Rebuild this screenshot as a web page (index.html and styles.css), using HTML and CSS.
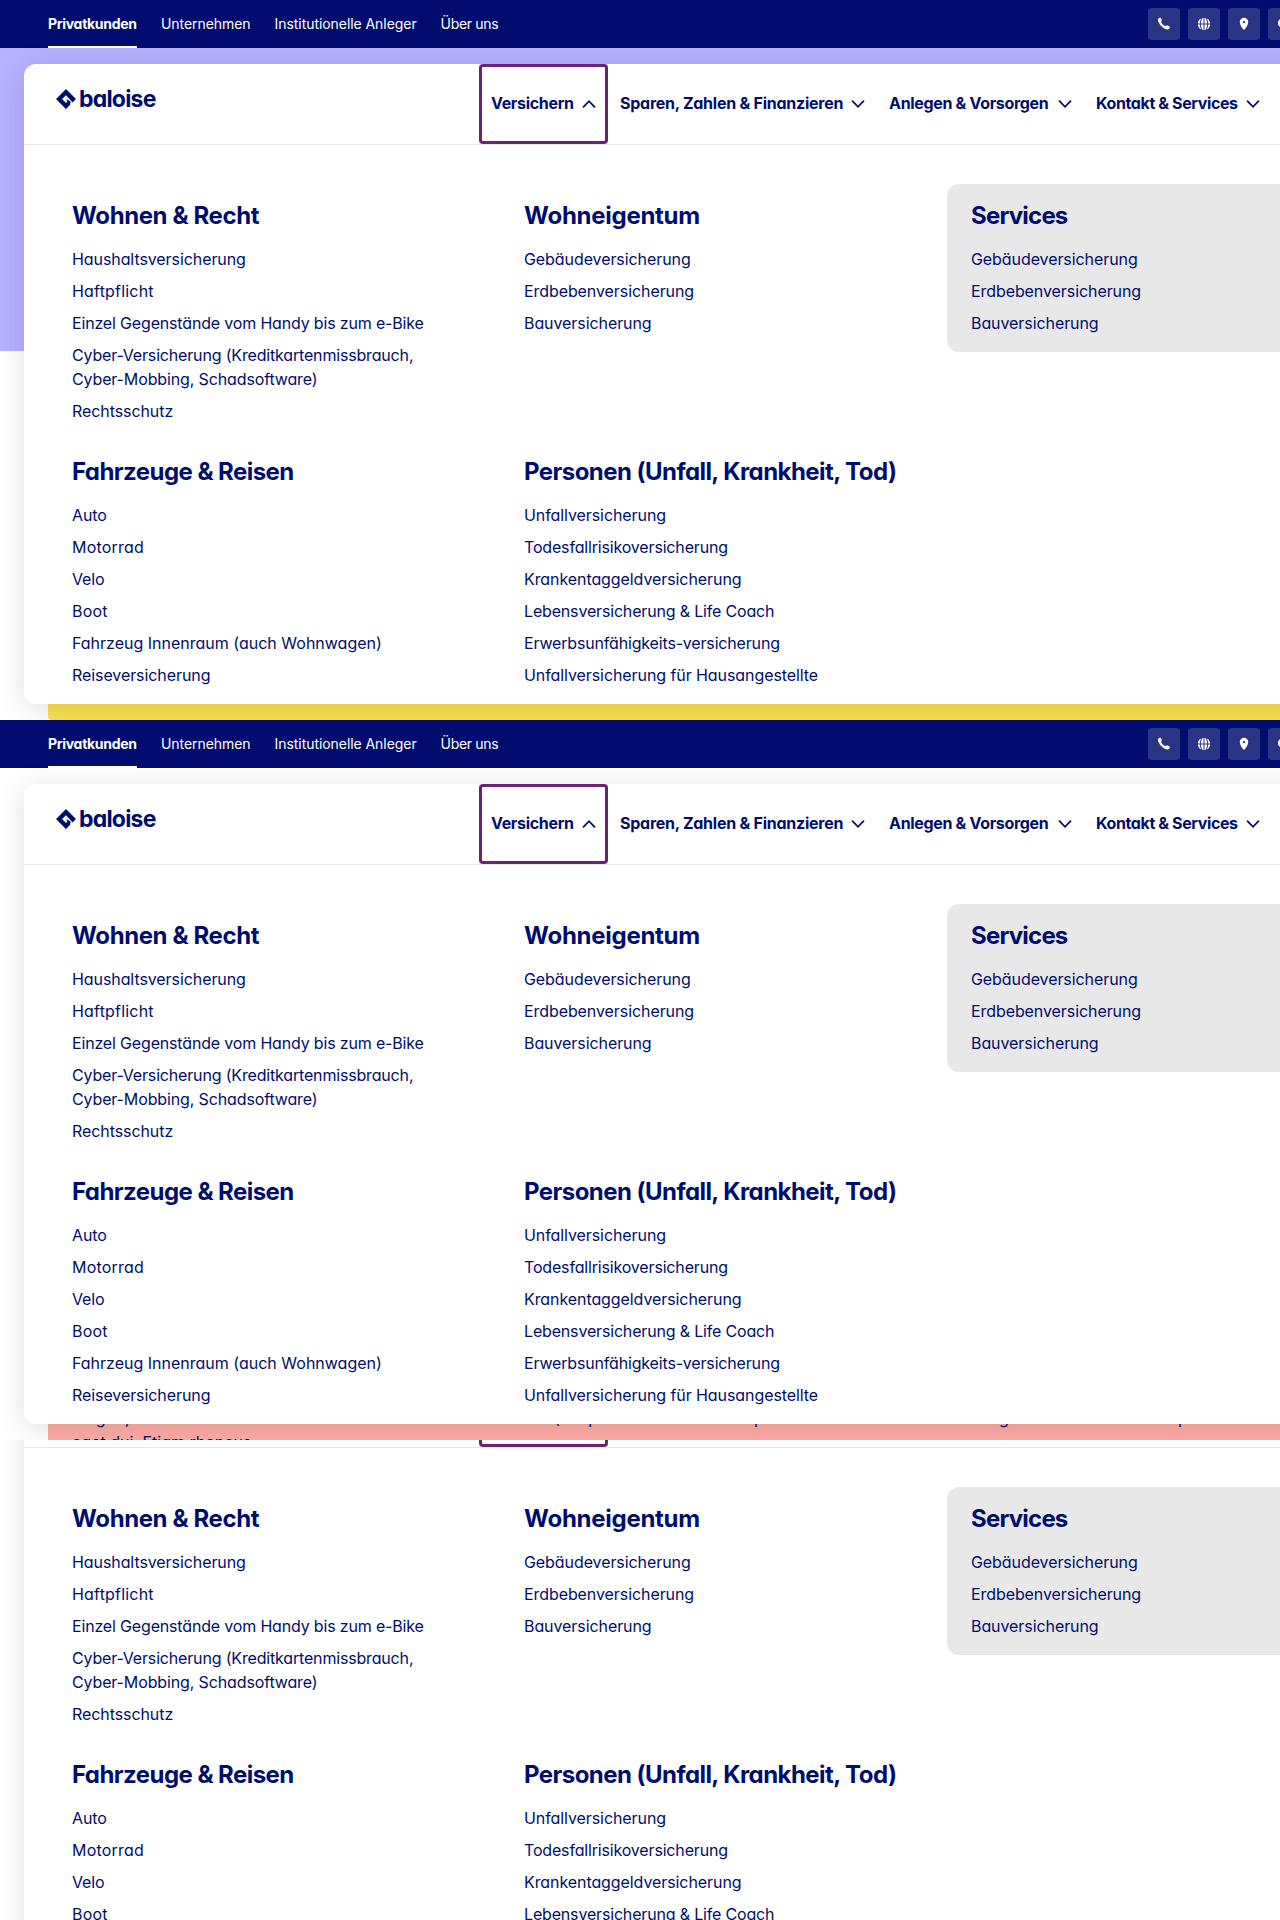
FILE: index.html
```html
<!DOCTYPE html>
<html lang="de">
<head>
<meta charset="utf-8">
<title>Baloise Navigation</title>
<link rel="stylesheet" href="styles.css">
</head>
<body>
<section class="frame frame--lavender"><div class="hero"></div><div class="teaser teaser--yellow"></div></section>
<section class="frame frame--red"><div class="teaser teaser--red"><p class="teaser__col">magna, sem<br>eget dui. Etiam rhoncus</p><p class="teaser__a">(tempus</p><p class="teaser__b">p</p><p class="teaser__c">g</p><p class="teaser__d">p</p></div></section>
<section class="frame frame--scrolled"></section>

<template id="navigation">
<div class="nav">
  <div class="meta">
    <nav class="meta__links">
      <a class="meta__link meta__link--active">Privatkunden</a>
      <a class="meta__link">Unternehmen</a>
      <a class="meta__link">Institutionelle Anleger</a>
      <a class="meta__link meta__link--tight">Über uns</a>
    </nav>
    <div class="meta__actions">
      <span class="action"><svg viewBox="0 0 32 32"><path d="M10.500 10.500c.5-.6 1.400-1 2.100-.5.800.6 1.200 1.900 1.100 2.700-.1.500-.6.800-.5 1.300.3 1.400 2.600 3.700 4 4.100.6.100.9-.5 1.500-.6 1-.1 2.500.5 3 1.300.5.900-.4 2-1.200 2.400-1.300.5-3.400-.1-5-1.200-2.400-1.500-4.400-3.900-5.200-6.400-.4-1.100-.5-2.300.2-3.100z"/></svg></span>
      <span class="action"><svg viewBox="0 0 32 32"><circle cx="16" cy="16" r="6.200"/><path class="cut" d="M16 9.500v13M9.500 16h13M14 9.800q-3.400 6.200 0 12.400M18 9.800q3.400 6.200 0 12.400"/></svg></span>
      <span class="action"><svg viewBox="0 0 32 32"><path fill-rule="evenodd" d="M16 9.800a4.200 4.200 0 0 0-4.200 4.200c0 2.700 2.400 6.300 4.200 8.100 1.800-1.800 4.200-5.400 4.200-8.100A4.200 4.200 0 0 0 16 9.800zm0 3.100a1.200 1.200 0 1 1 0 2.400 1.200 1.200 0 0 1 0-2.400z"/></svg></span>
      <span class="action"><svg viewBox="0 0 32 32"><path class="line" d="M18.500 18.500 22 22M19 15a4 4 0 1 1-8 0 4 4 0 0 1 8 0z"/></svg></span>
    </div>
  </div>
  <div class="panel">
    <header class="panel__head">
      <a class="logo"><svg viewBox="0 0 20 20"><path d="M10 0 20 10 16.600 13.400 10 6.200 6.100 10 10 14 11.400 12.600 10.400 11.500 11.600 10.400 14.700 13.100 14 16 10 20 0 10z"/></svg><span>baloise</span></a>
      <nav class="tabs">
        <a class="tab tab--open"><span>Versichern</span><svg viewBox="0 0 16 16"><path d="M2.500 10.800 8 5.200l5.500 5.600"/></svg></a>
        <a class="tab tab--invest"><span>Sparen, Zahlen &amp; Finanzieren</span><svg viewBox="0 0 16 16"><path d="M2.500 5.200 8 10.800l5.500-5.600"/></svg></a>
        <a class="tab tab--pension"><span>Anlegen &amp; Vorsorgen</span><svg viewBox="0 0 16 16"><path d="M2.500 5.200 8 10.800l5.500-5.600"/></svg></a>
        <a class="tab tab--contact"><span>Kontakt &amp; Services</span><svg viewBox="0 0 16 16"><path d="M2.500 5.200 8 10.800l5.500-5.600"/></svg></a>
      </nav>
    </header>
    <div class="menu">
      <div class="group"><h2 class="medium">Wohnen &amp; Recht</h2><ul><li>Haushaltsversicherung</li><li class="wide">Haftpflicht</li><li class="snug">Einzel Gegenstände vom Handy bis zum e-Bike</li><li class="snug">Cyber-Versicherung (Kreditkartenmissbrauch,<br><span class="even">Cyber-Mobbing, Schadsoftware)</span></li><li>Rechtsschutz</li></ul></div>
      <div class="group"><h2 class="loose">Wohneigentum</h2><ul><li>Gebäudeversicherung</li><li>Erdbebenversicherung</li><li>Bauversicherung</li></ul></div>
      <div class="group group--service"><h2 class="tight">Services</h2><ul><li>Gebäudeversicherung</li><li>Erdbebenversicherung</li><li>Bauversicherung</li></ul></div>
      <div class="group"><h2>Fahrzeuge &amp; Reisen</h2><ul><li>Auto</li><li class="wide">Motorrad</li><li class="snug">Velo</li><li class="wide">Boot</li><li class="even">Fahrzeug Innenraum (auch Wohnwagen)</li><li>Reiseversicherung</li></ul></div>
      <div class="group"><h2>Personen (Unfall, Krankheit, Tod)</h2><ul><li>Unfallversicherung</li><li class="snug">Todesfallrisikoversicherung</li><li>Krankentaggeldversicherung</li><li class="snug">Lebensversicherung &amp; Life Coach</li><li class="snug">Erwerbsunfähigkeits-versicherung</li><li>Unfallversicherung für Hausangestellte</li></ul></div>
    </div>
  </div>
</div>
</template>
<script src="navigation.js"></script>
</body>
</html>
```
FILE: navigation.js
```js
const template = document.getElementById('navigation');
document.querySelectorAll('.frame').forEach((frame) => {
  frame.append(template.content.cloneNode(true));
});
```
FILE: styles.css
```css
* { box-sizing: border-box; }
body {
  margin: 0;
  width: 1280px;
  height: 1920px;
  overflow: hidden;
  background: #fff;
  color: #000d6e;
  font-family: Inter, sans-serif;
  font-feature-settings: "cv11";
}
h2, ul, p { margin: 0; padding: 0; }
ul { list-style: none; }

/* Viewports */
.frame { position: relative; width: 1280px; height: 720px; overflow: hidden; background: #fff; }
.frame--scrolled { height: 480px; }
.frame--scrolled .nav { margin-top: -137px; }
.hero { position: absolute; inset: 0 0 auto; height: 351px; background: #b8b2ff; }
.teaser { position: absolute; left: 48px; right: 0; bottom: 0; height: 120px; font-size: 16px; line-height: 24px; }
.teaser--yellow { background: #fae052; border-radius: 0 0 0 4px; }
.teaser--red { background: #ffaca6; height: 60px; overflow: hidden; }
.teaser p { position: absolute; top: 26px; white-space: nowrap; }
.teaser__col { left: 24px; }
.teaser .teaser__a { left: 506px; }
.teaser .teaser__b { left: 706px; }
.teaser .teaser__c { left: 951px; }
.teaser .teaser__d { left: 1130px; }
.nav { position: relative; }

/* Meta bar */
.meta { display: flex; justify-content: space-between; height: 48px; padding-left: 48px; background: #000d6e; color: #fff; }
.meta__links { display: flex; gap: 24px; }
.meta__link { height: 48px; font-size: 14px; line-height: 48px; white-space: nowrap; letter-spacing: -.06px; }
.meta__link--active { width: 89px; border-bottom: 2px solid #fff; font-weight: 700; letter-spacing: -.3px; }
.meta__link--tight { letter-spacing: -.32px; }
.meta__actions { display: flex; gap: 8px; width: 132px; padding-top: 8px; }
.action { flex: none; width: 32px; height: 32px; border-radius: 4px; background: #293485; }
.action svg { display: block; width: 32px; height: 32px; fill: #fff; }
.action .cut { fill: none; stroke: #293485; stroke-width: 1; }
.action .line { fill: none; stroke: #fff; stroke-width: 2; }

/* Navigation panel */
.panel { width: 1400px; height: 640px; margin: 16px 0 0 24px; border-radius: 12px; background: #fff; box-shadow: 0 4px 30px rgba(0, 0, 0, .13); }
.panel__head { display: flex; height: 81px; border-bottom: 1px solid #e8e8e8; }
.logo { display: flex; flex: 0 0 455px; gap: 3px; padding: 25px 0 0 32px; }
.logo svg { flex: none; width: 20px; height: 20px; fill: currentColor; }
.logo span { margin-top: -2px; font-size: 23px; line-height: 24px; font-weight: 700; letter-spacing: -.8px; }
.tabs { display: flex; }
.tab { display: flex; align-items: center; gap: 8px; height: 80px; padding: 0 11px 0 12px; font-size: 16px; font-weight: 700; white-space: nowrap; letter-spacing: -.32px; }
.tab span { width: 82px; margin-top: -2px; }
.tab svg { flex: none; width: 16px; height: 16px; fill: none; stroke: currentColor; stroke-width: 1.8; stroke-linecap: round; }
.tab--open { width: 129px; border-radius: 4px; box-shadow: inset 0 0 0 3px #6c2273; }
.tab--invest { letter-spacing: -.25px; }
.tab--invest span { width: 222px; }
.tab--pension span { width: 160px; }
.tab--contact { letter-spacing: -.38px; }
.tab--contact span { width: 141px; }

/* Menu groups */
.menu { display: grid; grid-template-columns: 452px 423px 405px; grid-template-rows: 224px auto; row-gap: 32px; padding: 55px 0 0 48px; }
.group h2 { font-size: 24px; line-height: 32px; font-weight: 700; letter-spacing: -.55px; white-space: nowrap; }
.group h2.medium { letter-spacing: -.4px; }
.group h2.loose { letter-spacing: -.27px; }
.group h2.tight { letter-spacing: -.8px; }
.group ul { display: flex; flex-direction: column; gap: 8px; margin-top: 15px; font-size: 16px; line-height: 24px; letter-spacing: -.08px; white-space: nowrap; }
.group .wide { letter-spacing: .2px; }
.group .even { letter-spacing: 0; }
.group .snug { letter-spacing: -.17px; }
.group .snug .even { letter-spacing: -.13px; }
.group--service { align-self: start; height: 168px; margin-top: -16px; padding: 16px 24px; border-radius: 12px; background: #e8e8e8; }
```
